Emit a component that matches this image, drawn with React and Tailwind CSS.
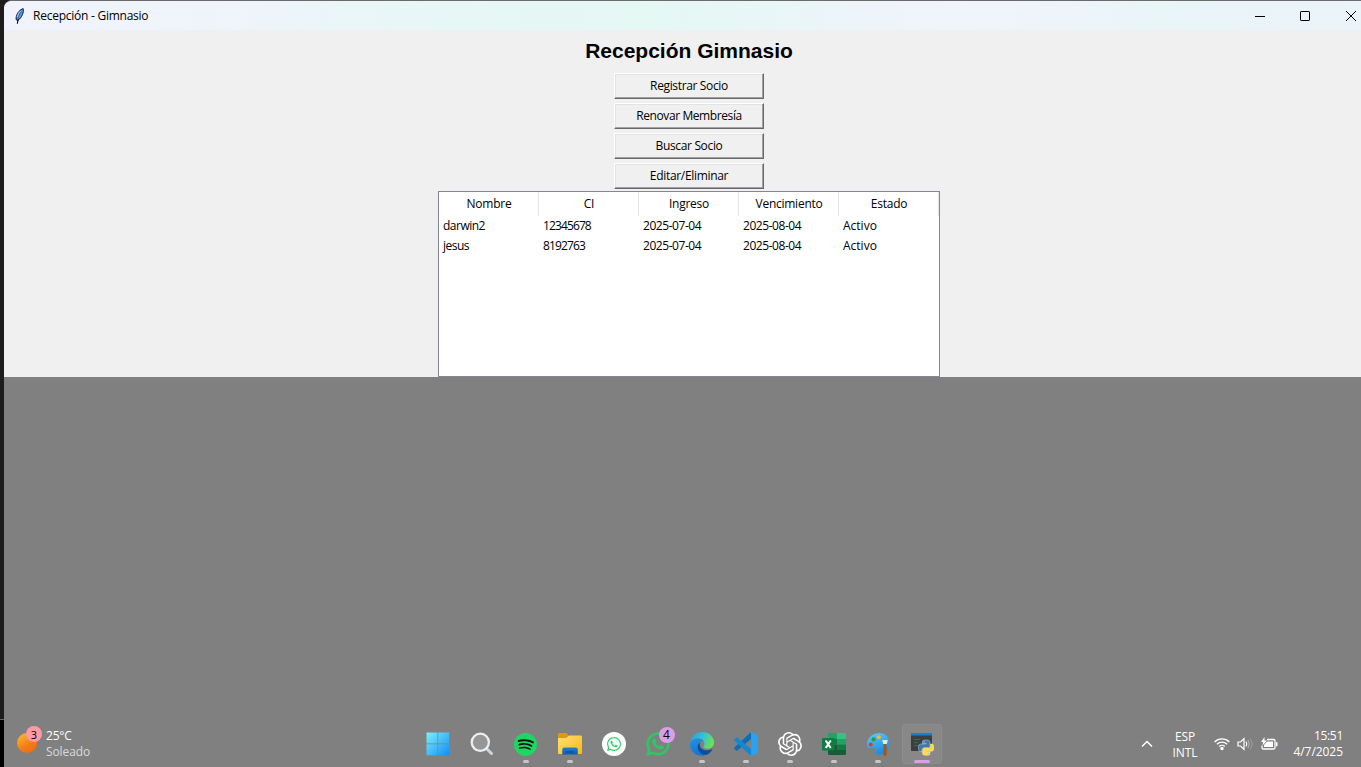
import React from "react";
import { FaWhatsapp } from "react-icons/fa";
import { SiSpotify, SiOpenai } from "react-icons/si";

const SNAKE =
  "M14.25.18l.9.2.73.26.59.3.45.32.34.34.25.34.16.33.1.3.04.26.02.2-.01.13V8.5l-.05.63-.13.55-.21.46-.26.38-.3.31-.33.25-.35.19-.35.14-.33.1-.3.07-.26.04-.21.02H8.77l-.69.05-.59.14-.5.22-.41.27-.33.32-.27.35-.2.36-.15.37-.1.35-.07.32-.04.27-.02.21v3.06H3.17l-.21-.03-.28-.07-.32-.12-.35-.18-.36-.26-.36-.36-.35-.46-.32-.59-.28-.73-.21-.88-.14-1.05-.05-1.23.06-1.22.16-1.04.24-.87.32-.71.36-.57.4-.44.42-.33.42-.24.4-.16.36-.1.32-.05.24-.01h.16l.06.01h8.16v-.83H6.18l-.01-2.75-.02-.37.05-.34.11-.31.17-.28.25-.26.31-.23.38-.2.44-.18.51-.15.58-.12.64-.1.71-.06.77-.04.84-.02 1.27.05zm-6.3 1.98l-.23.33-.08.41.08.41.23.34.33.22.41.09.41-.09.33-.22.23-.34.08-.41-.08-.41-.23-.33-.33-.22-.41-.09-.41.09z";

function Feather() {
  return (
    <svg width="10" height="16" viewBox="0 0 10 16">
      <path d="M8.2.6C5.200 1.500 2.200 4.500 1.300 8.500L1 11.500l1.600 1C5.500 11 7.800 7 8.400 3.500z" fill="#5b9cf0" stroke="#0b0f1c" strokeWidth=".9" />
      <path d="M3.300 11C2.800 12.500 2.500 14 2.400 15.800" fill="none" stroke="#0b0f1c" strokeWidth="1.200" />
      <path d="M6.600 3.500C4.800 5.500 3.600 8 3 11" fill="none" stroke="#1d4f9c" strokeWidth=".8" />
      <path d="M5.500 3C4 4.500 2.800 6.500 2.300 9" fill="none" stroke="#c8defa" strokeWidth=".8" />
    </svg>
  );
}

function Windows() {
  return (
    <svg width="24" height="24" viewBox="0 0 24 24" className="mr-px">
      <defs>
        <linearGradient id="win" x1="0" y1="0" x2="24" y2="24" gradientUnits="userSpaceOnUse">
          <stop stopColor="#7ff0ff" />
          <stop offset="1" stopColor="#0a8cf5" />
        </linearGradient>
      </defs>
      <path d="M.5.5h11v11H.5zM12.200.5h11v11h-11zM.5 12.200h11v11H.5zM12.200 12.200h11v11h-11z" fill="url(#win)" />
    </svg>
  );
}

function Search() {
  return (
    <svg width="24" height="24" viewBox="0 0 24 24">
      <path d="M16.500 16.500l5 5" stroke="#cfd4d8" strokeWidth="3" strokeLinecap="round" />
      <circle cx="10.300" cy="10.300" r="8.600" fill="#969696" stroke="#eceef0" strokeWidth="2.300" />
    </svg>
  );
}

function Spotify() {
  return (
    <span className="mr-px flex h-[22px] w-[22px] items-center justify-center">
      <span className="flex h-[18px] w-[18px] shrink-0 items-center justify-center rounded-full bg-[#111]">
        <SiSpotify size={23} color="#1ed760" className="shrink-0" />
      </span>
    </span>
  );
}

function Folder() {
  return (
    <svg width="26" height="24" viewBox="0 0 26 24">
      <defs>
        <linearGradient id="fold" x1="0" y1="4" x2="18" y2="24" gradientUnits="userSpaceOnUse">
          <stop stopColor="#ffe07a" />
          <stop offset="1" stopColor="#fbbd1d" />
        </linearGradient>
        <linearGradient id="tray" x1="0" y1="15" x2="0" y2="23" gradientUnits="userSpaceOnUse">
          <stop stopColor="#1f86d8" />
          <stop offset="1" stopColor="#0d5aa8" />
        </linearGradient>
      </defs>
      <path d="M1 2.500Q1 1 2.500 1H9.500l2 2.500-2.500 3H1z" fill="#dc9a12" />
      <path d="M1 6h8l3-2.500h12q1 0 1 1.500v16q0 1-1 1H2q-1 0-1-1z" fill="url(#fold)" />
      <path d="M5.300 22.500V17.500q0-2 2-2h11.500q2 0 2 2v5z" fill="url(#tray)" />
      <path d="M9 20h8" stroke="#0a4688" strokeWidth="1" />
    </svg>
  );
}

function WhatsappRound() {
  return (
    <span className="flex h-6 w-6 items-center justify-center rounded-full bg-white">
      <FaWhatsapp size={16} color="#25d366" />
    </span>
  );
}

function WhatsappBadge() {
  return (
    <span className="relative mr-px flex">
      <FaWhatsapp size={26} color="#2bc864" stroke="#2bc864" strokeWidth={14} />
      <span className="absolute -top-[4px] left-[14px] flex h-4 w-4 items-center justify-center rounded-full bg-[#dc9ee6] text-[12px] leading-none text-black">4</span>
    </span>
  );
}

function Edge() {
  return (
    <svg width="24" height="24" viewBox="0 0 24 24">
      <defs>
        <linearGradient id="e1" x1="2" y1="4" x2="22" y2="13" gradientUnits="userSpaceOnUse">
          <stop stopColor="#2aa4e4" />
          <stop offset=".5" stopColor="#36c4cf" />
          <stop offset="1" stopColor="#6fe34c" />
        </linearGradient>
        <linearGradient id="e2" x1="4" y1="8" x2="12" y2="24" gradientUnits="userSpaceOnUse">
          <stop stopColor="#1c8fe0" />
          <stop offset="1" stopColor="#1271cf" />
        </linearGradient>
      </defs>
      <path d="M.2 11C.8 4.600 5.800 0 12 0c7 0 12 4.800 12 10.500 0 3.800-3 6.200-6.400 6.200-3 0-4.300-1.100-4.300-1.900 0-.7 1.200-1.200 1.200-3 0-3-3-5.300-6.700-5.300C4 6.500 1.200 8.500.2 11z" fill="url(#e1)" />
      <path d="M.1 12C.5 8.800 4 6.500 7.800 6.500c2.500 0 4.600 1 5.800 2.600C10 8.500 7.600 11 7.600 14.500c0 4 3.400 7.500 7.600 8.900C7.200 25.400-.5 20 .1 12z" fill="url(#e2)" />
      <path d="M10.300 10.200C8.500 11.200 7.600 13 7.600 15c0 4.500 3.900 8 8.300 8 2.600-.9 5-3 6.300-5.300.3-.6-.1-.8-.6-.5-4.800 2.300-11.800.7-11.800-4.800 0-.8.2-1.500.5-2.200z" fill="#0d4f9e" />
    </svg>
  );
}

function VsCode() {
  return (
    <svg width="24" height="24" viewBox="0 0 24 24">
      <path d="M17 0v7L3.500 18.500q-.7.500-1.300 0L.4 17q-.7-.8 0-1.500z" fill="#0b6fb8" />
      <path d="M17 24v-7L3.500 5.500q-.7-.5-1.300 0L.4 7q-.7.800 0 1.500z" fill="#1487d4" />
      <path d="M17 0l6 2.700q1 .5 1 1.500v15.600q0 1-1 1.500L17 24q-.8.200-1-.8.900.3 1.500-.8V1.600Q16.900.5 16 .8q.2-1 1-.8z" fill="#27a3f2" />
    </svg>
  );
}

function Excel() {
  return (
    <svg width="26" height="24" viewBox="0 0 26 24">
      <path d="M7 1h9v6H7z" fill="#21a366" />
      <path d="M16 1h7.500Q25 1 25 2.500V7h-9z" fill="#33c481" />
      <path d="M7 7h9v5.500H7z" fill="#107c41" />
      <path d="M16 7h9v5.500h-9z" fill="#21a366" />
      <path d="M7 12.500h9V23H8.500Q7 23 7 21.500z" fill="#185c37" />
      <path d="M16 12.500h9v5.500h-9z" fill="#107c41" />
      <path d="M16 18h9v3.500q0 1.500-1.500 1.500H16z" fill="#185c37" />
      <rect x="1" y="6" width="12.500" height="12.500" rx="1" fill="#107c41" />
      <path d="M4.700 8.500l5 7.500M9.700 8.500l-5 7.500" stroke="#fff" strokeWidth="2.100" />
    </svg>
  );
}

function Paint() {
  return (
    <svg width="24" height="24" viewBox="0 0 24 24">
      <defs>
        <linearGradient id="pal" x1="6" y1="0" x2="16" y2="24" gradientUnits="userSpaceOnUse">
          <stop stopColor="#5ccbf7" />
          <stop offset="1" stopColor="#1583dc" />
        </linearGradient>
      </defs>
      <path d="M13 1C5 1.500.8 7 1 13c.2 3 3 4 5 2.800 2-1 4 .2 3.500 2.700-.6 3 1.500 4.500 4.500 4C20 21.500 23 17 23 11 23 4.500 19 .7 13 1z" fill="url(#pal)" />
      <circle cx="4.700" cy="12.500" r="2" fill="#d9401f" />
      <circle cx="7.600" cy="7.400" r="2.100" fill="#2c9b3c" />
      <circle cx="12.800" cy="5.300" r="2" fill="#fbb917" />
      <path d="M17.700 12h2.600l.4 10q0 2-1.700 2t-1.700-2z" fill="#a8560f" />
      <path d="M16.300 8h5.400l-.9 4h-3.600z" fill="#f4e7d0" />
    </svg>
  );
}

function PythonConsole() {
  return (
    <svg width="24" height="24" viewBox="0 0 24 24">
      <path d="M1 1h21v18H1z" fill="#3c3f41" />
      <path d="M1 1h21v2.500H1z" fill="#1b7fc9" />
      <path d="M4 7.500h6M4 10.500h4M4 13.500h5" stroke="#3c6b48" strokeWidth="1" />
      <g transform="translate(8.500 8) scale(.64)">
        <path d={SNAKE} fill="#3a78ad" stroke="#dbe6ee" strokeWidth=".7" />
        <path d={SNAKE} fill="#ffd94a" stroke="#f4efd8" strokeWidth=".7" transform="rotate(180 12 12)" />
      </g>
    </svg>
  );
}

const apps = [
  { id: "start", icon: <Windows /> },
  { id: "search", icon: <Search /> },
  { id: "spotify", icon: <Spotify />, open: true },
  { id: "explorer", icon: <Folder />, open: true },
  { id: "whatsapp-web", icon: <WhatsappRound /> },
  { id: "whatsapp", icon: <WhatsappBadge /> },
  { id: "edge", icon: <Edge />, open: true },
  { id: "vscode", icon: <VsCode />, open: true },
  { id: "chatgpt", icon: <SiOpenai size={24} color="#fff" />, open: true },
  { id: "excel", icon: <Excel />, open: true },
  { id: "paint", icon: <Paint />, open: true },
  { id: "python", icon: <PythonConsole />, open: true, active: true },
];

const actions = [
  { label: "Registrar Socio", track: "tracking-[-0.35px]" },
  { label: "Renovar Membresía", track: "tracking-[-0.4px]" },
  { label: "Buscar Socio", track: "tracking-[-0.35px]" },
  { label: "Editar/Eliminar", track: "tracking-[-0.32px]" },
];

const columns = ["Nombre", "CI", "Ingreso", "Vencimiento", "Estado"];
const cellTracking = [
  "tracking-[-0.5px]",
  "tracking-[-0.88px]",
  "tracking-[-0.45px]",
  "tracking-[-0.45px]",
  "tracking-normal",
];
const rows = [
  ["darwin2", "12345678", "2025-07-04", "2025-08-04", "Activo"],
  ["jesus", "8192763", "2025-07-04", "2025-08-04", "Activo"],
];

function TitleBar() {
  return (
    <header className="flex h-[29px] shrink-0 items-center bg-[linear-gradient(90deg,#f0f3fb_0%,#eff4fb_15%,#e6f7f5_35%,#e4f8f4_48%,#ebf5f8_60%,#f0f4fb_70%,#eaf5f8_85%,#ebf4f9_100%)] pl-[11px]">
      <Feather />
      <span className="ml-2 pt-px text-[12px] leading-4 tracking-[-0.25px] text-black">Recepción - Gimnasio</span>
      <div className="ml-auto flex items-center">
        <svg width="106" height="12" viewBox="0 0 106 12" fill="none" stroke="#000">
          <path d="M0 6.500h10" />
          <rect x="45.500" y="1.500" width="9" height="9" rx=".6" />
          <path d="M91 1l10 10M101 1L91 11" />
        </svg>
      </div>
    </header>
  );
}

function Tree() {
  return (
    <div className="mt-[2px] h-[186px] w-[502px] border border-[#828790] bg-white text-[12px] text-black">
      <div className="flex h-6">
        {columns.map((c) => (
          <div key={c} className="flex w-[100px] items-center justify-center border-r border-[#e5e5e5] pl-px tracking-[-0.25px]">
            {c}
          </div>
        ))}
      </div>
      {rows.map((r) => (
        <div key={r[0]} className="flex h-5">
          {r.map((v, i) => (
            <div key={i} className={"flex w-[100px] items-center pl-1 " + cellTracking[i]}>
              {v}
            </div>
          ))}
        </div>
      ))}
    </div>
  );
}

function Taskbar() {
  return (
    <footer className="grid h-[47px] grid-cols-[414px_1fr_419px] text-white">
      <div className="flex pl-[13px] pt-[5px]">
        <div className="relative h-8 w-[27px]">
          <div className="mt-[8px] h-5 w-5 rounded-full bg-[linear-gradient(150deg,#f9c22e,#f57a16_60%,#ea6a10)]" />
          <span className="absolute left-[9px] top-[1px] flex h-4 w-4 items-center justify-center rounded-full bg-[#ff99a4] text-[11px] leading-none text-black">3</span>
        </div>
        <div className="ml-[2px] pt-[3px] text-[12px] leading-4">
          <div className="tracking-[-0.2px]">25°C</div>
          <div className="tracking-[-0.1px] text-[#dadada]">Soleado</div>
        </div>
      </div>
      <div className="flex gap-1 pt-1">
        {apps.map((a) => (
          <div
            key={a.id}
            className={
              "relative flex h-10 w-10 items-center justify-center rounded " +
              (a.active ? "bg-[#888888] ring-1 ring-inset ring-[#8d8d8d]" : "")
            }
          >
            {a.icon}
            {a.open && (
              <span
                className={
                  "absolute bottom-px left-1/2 h-[3px] -translate-x-1/2 rounded-full " +
                  (a.active ? "w-4 bg-[#dc9ee6]" : "w-[6px] bg-[#c6c6c6]")
                }
              />
            )}
          </div>
        ))}
      </div>
      <div className="flex items-start justify-end pr-[18px] text-[12px] leading-4">
        <svg className="mr-[20px] mt-[20px]" width="12" height="8" viewBox="0 0 12 8" fill="none" stroke="#fff" strokeWidth="1.500">
          <path d="M1 6.500l5-5 5 5" />
        </svg>
        <div className="mr-[17px] pt-[9px] text-center leading-[16px] tracking-[-0.1px]">
          <div>ESP</div>
          <div>INTL</div>
        </div>
        <svg className="mr-[7px] mt-[17px]" width="16" height="14" viewBox="0 0 16 14" fill="none" stroke="#fff" strokeWidth="1.300">
          <path d="M.6 5a10.500 10.500 0 0 1 14.800 0M2.900 7.300a7.200 7.200 0 0 1 10.200 0M5.200 9.500a4 4 0 0 1 5.600 0" />
          <circle cx="8" cy="11.600" r="1.100" fill="#fff" />
        </svg>
        <svg className="mr-[8px] mt-[17px]" width="16" height="14" viewBox="0 0 16 14" fill="none" stroke="#fff">
          <path d="M1 5h2.500L7 1.700v10.600L3.500 9H1z" strokeWidth="1.200" />
          <path d="M9 4.500q1.500 2.500 0 5" strokeWidth="1.200" />
          <path d="M11 3q2.500 4 0 8" stroke="#b5b5b5" />
          <path d="M13 1.500q4 5.500 0 11" stroke="#a0a0a0" />
        </svg>
        <svg className="mr-[15px] mt-[17px]" width="17" height="14" viewBox="0 0 17 14">
          <path d="M6 2.500h6.500q1.500 0 1.500 1.500v6.500q0 1.500-1.500 1.500h-10q-1.500 0-1.500-1.500V8.500" fill="none" stroke="#fff" strokeWidth="1.300" />
          <path d="M6 4.500h6v5.500H3V8z" fill="#fff" />
          <path d="M15 5.200h1.500v4H15z" fill="#fff" />
          <path d="M3.500 0L0 5h2.200L1.500 8.500 6 3.500H3.500z" fill="#fff" />
        </svg>
        <div className="pt-2 text-right">
          <div className="tracking-[-0.3px]">15:51</div>
          <div className="tracking-[-0.05px]">4/7/2025</div>
        </div>
      </div>
    </footer>
  );
}

export default function App() {
  return (
    <div className="flex h-[767px] w-[1361px] overflow-hidden bg-[#1e1b1b] font-['Open_Sans','Noto_Sans',sans-serif]">
      <div className="flex w-1 shrink-0 flex-col">
        <div className="h-[720px] border-b border-[#666]" />
        <div className="flex-1 bg-black" />
      </div>
      <div className="flex min-w-0 flex-1 flex-col overflow-hidden rounded-tl-lg border-t border-[#6b6b6b] bg-[#f0f0f0]">
        <TitleBar />
        <main className="flex h-[347px] shrink-0 flex-col items-center pl-[13px]">
          <h1 className="h-[43px] pt-[8px] font-['Liberation_Sans',sans-serif] text-[21px] font-bold leading-[26px] text-black">
            Recepción Gimnasio
          </h1>
          <div className="flex flex-col gap-1">
            {actions.map((a) => (
              <button
                key={a.label}
                className={
                  "h-[26px] w-[150px] border border-b-[#696969] border-l-white border-r-[#696969] border-t-white bg-[#f0f0f0] text-[12px] text-black shadow-[inset_-1px_-1px_0_#a0a0a0,inset_1px_1px_0_#e3e3e3] " +
                  a.track
                }
              >
                {a.label}
              </button>
            ))}
          </div>
          <Tree />
        </main>
        <div className="flex flex-1 flex-col justify-end bg-[#808080]">
          <Taskbar />
        </div>
      </div>
    </div>
  );
}
